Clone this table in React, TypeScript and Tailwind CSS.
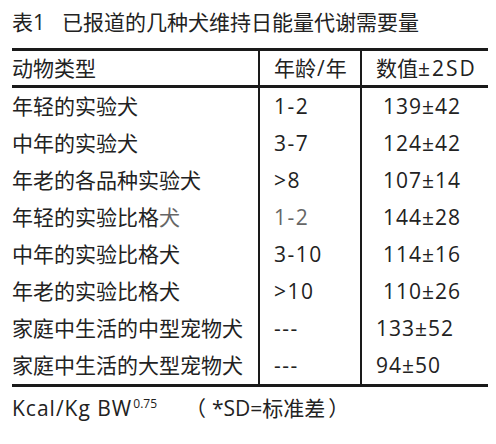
import React from "react";

const rows: { name: string; age: string; val: string; gray?: boolean; indent: boolean }[] = [
  { name: "年轻的实验犬", age: "1-2", val: "139±42", indent: true },
  { name: "中年的实验犬", age: "3-7", val: "124±42", indent: true },
  { name: "年老的各品种实验犬", age: ">8", val: "107±14", indent: true },
  { name: "年轻的实验比格", age: "1-2", val: "144±28", indent: true, gray: true },
  { name: "中年的实验比格犬", age: "3-10", val: "114±16", indent: true },
  { name: "年老的实验比格犬", age: ">10", val: "110±26", indent: true },
  { name: "家庭中生活的中型宠物犬", age: "---", val: "133±52", indent: false },
  { name: "家庭中生活的大型宠物犬", age: "---", val: "94±50", indent: false },
];

export default function App() {
  return (
    <div
      className="w-[496px] h-[444px] bg-white text-[#222] text-[21px] leading-none"
      style={{ fontFamily: '"Open Sans", "Noto Sans CJK SC", sans-serif' }}
    >
      <div className="h-[48px] flex items-center pl-[12px] pb-[3px]">
        <span>表1</span>
        <span className="ml-[17px]">已报道的几种犬维持日能量代谢需要量</span>
      </div>
      <div className="ml-[12px] w-[476px] border-t-[3px] border-b-[3px] border-[#1a1a1a]">
        <div className="flex h-[37px] border-b-[3px] border-[#1a1a1a]">
          <div className="w-[248px] border-r-2 border-[#1a1a1a] flex items-center">动物类型</div>
          <div className="w-[102px] border-r-2 border-[#1a1a1a] flex items-center pl-[14px]">
            年龄<span className="tracking-[1px] ml-[1px]">/</span>年
          </div>
          <div className="flex-1 flex items-center pl-[14px]">
            数值<span className="tracking-[2px]">±2SD</span>
          </div>
        </div>
        {rows.map((r, i) => (
          <div key={i} className="flex h-[37px]">
            <div className="w-[248px] border-r-2 border-[#1a1a1a] flex items-center">
              {r.name}
              {r.gray ? <span className="text-[#666]">犬</span> : null}
            </div>
            <div
              className={
                "w-[102px] border-r-2 border-[#1a1a1a] flex items-center pl-[14px] tracking-[1.5px] " +
                (r.gray ? "text-[#666]" : "")
              }
            >
              {r.age}
            </div>
            <div
              className={
                "flex-1 flex items-center tracking-[1px] " + (r.indent ? "pl-[21px]" : "pl-[14px]")
              }
            >
              {r.val}
            </div>
          </div>
        ))}
      </div>
      <div className="h-[42px] flex items-center pl-[12px]">
        <span className="tracking-[1px]">Kcal/Kg BW</span>
        <span className="text-[12px] self-start mt-[11px] ml-[1px]">0.75</span>
        <span className="ml-[28px]">（</span>
        <span className="ml-[6px]">*SD=标准差</span>
        <span className="ml-[3px]">）</span>
      </div>
    </div>
  );
}
